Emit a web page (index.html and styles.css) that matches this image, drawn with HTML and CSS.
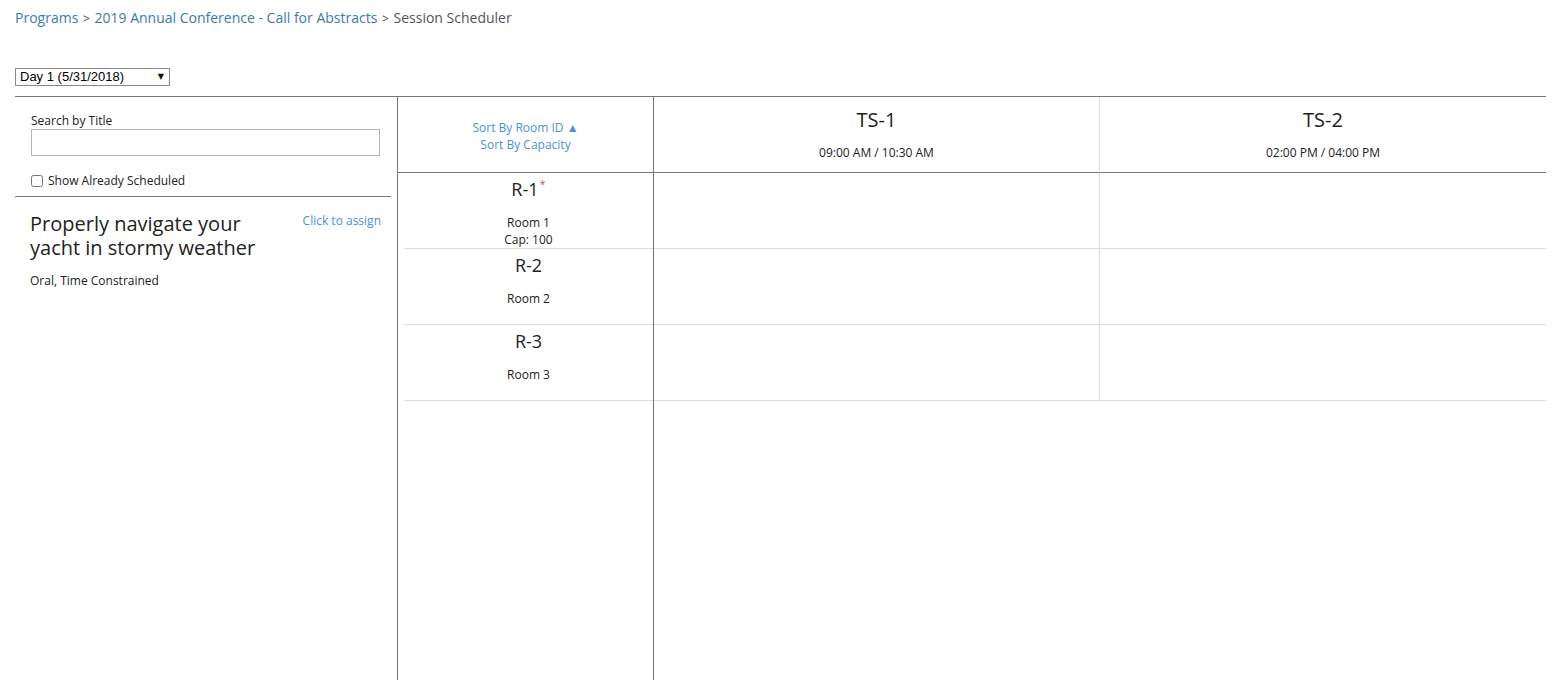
FILE: index.html
```html
<!DOCTYPE html>
<html lang="en">
<head>
    <meta charset="UTF-8">
    <meta name="viewport" content="width=device-width, initial-scale=1.0">
    <title>Session Scheduler</title>
    <link rel="stylesheet" href="styles.css">
</head>
<body>
    <div class="breadcrumb">
        <a href="#">Programs</a>
        <span class="sep">&gt;</span>
        <a href="#">2019 Annual Conference - Call for Abstracts</a>
        <span class="sep">&gt;</span>
        <span class="current">Session Scheduler</span>
    </div>

    <div class="day-picker">
        <select>
            <option>Day 1 (5/31/2018)</option>
            <option>Day 2 (6/1/2018)</option>
        </select>
    </div>

    <div class="scheduler">
        <div class="sidebar">
            <div class="search">
                <label class="search-label" for="searchTitle">Search by Title</label>
                <input type="text" id="searchTitle">
                <label class="show-scheduled">
                    <input type="checkbox">
                    <span>Show Already Scheduled</span>
                </label>
            </div>
            <div class="abstract">
                <div class="abstract-head">
                    <div class="abstract-title">Properly navigate your yacht in stormy weather</div>
                    <a href="#" class="assign">Click to assign</a>
                </div>
                <div class="abstract-type">Oral, Time Constrained</div>
            </div>
        </div>

        <div class="grid">
            <div class="rooms">
                <div class="head-cell sort">
                    <a href="#">Sort By Room ID &#9650;</a>
                    <a href="#">Sort By Capacity</a>
                </div>
                <div class="room-cell">
                    <div class="room-id">R-1<sup class="flag">*</sup></div>
                    <div class="room-name">Room 1</div>
                    <div class="room-cap">Cap: 100</div>
                </div>
                <div class="room-cell">
                    <div class="room-id">R-2</div>
                    <div class="room-name">Room 2</div>
                </div>
                <div class="room-cell">
                    <div class="room-id">R-3</div>
                    <div class="room-name">Room 3</div>
                </div>
            </div>

            <div class="slot">
                <div class="head-cell">
                    <div class="slot-name">TS-1</div>
                    <div class="slot-time">09:00 AM / 10:30 AM</div>
                </div>
                <div class="slot-cell"></div>
                <div class="slot-cell"></div>
                <div class="slot-cell"></div>
            </div>

            <div class="slot last">
                <div class="head-cell">
                    <div class="slot-name">TS-2</div>
                    <div class="slot-time">02:00 PM / 04:00 PM</div>
                </div>
                <div class="slot-cell"></div>
                <div class="slot-cell"></div>
                <div class="slot-cell"></div>
            </div>
        </div>
    </div>
</body>
</html>
```

FILE: styles.css
```css
html, body {
    height: 100%;
}

body {
    font-family: 'Open Sans', 'Liberation Sans', sans-serif;
    color: #222;
    background-color: #fff;
    margin: 0;
    padding: 0 17px 0 15px;
    display: flex;
    flex-direction: column;
    overflow: hidden;
}

a {
    text-decoration: none;
}

.breadcrumb {
    padding-top: 8px;
    height: 20px;
    font-size: 14px;
    line-height: 20px;
    color: #555;
    white-space: nowrap;
}

.breadcrumb a {
    color: #3a7ab3;
}

.breadcrumb .sep {
    color: #444;
    font-size: 12px;
    margin: 0 1px;
}

.day-picker {
    margin-top: 40px;
    margin-bottom: 10px;
    position: relative;
    width: 155px;
    height: 18px;
}

.day-picker select {
    display: block;
    -webkit-appearance: none;
    appearance: none;
    width: 155px;
    height: 18px;
    margin: 0;
    padding: 0 0 0 4px;
    border: 1px solid #8a8a8a;
    border-radius: 0;
    background-color: #fff;
    font-family: 'Liberation Sans', Arial, sans-serif;
    font-size: 13px;
    line-height: 16px;
    color: #000;
}

.day-picker::after {
    content: '\25BC';
    position: absolute;
    right: 6px;
    top: 1px;
    font-family: 'DejaVu Sans', sans-serif;
    font-size: 8px;
    line-height: 16px;
    color: #111;
    pointer-events: none;
}

.scheduler {
    flex-grow: 1;
    display: flex;
    border-top: 1px solid #777;
}

/* left column */
.sidebar {
    width: 376px;
    margin-right: 6px;
    flex-shrink: 0;
}

.search {
    padding: 15px 11px 6px 16px;
    border-bottom: 1px solid #777;
}

.search-label {
    display: block;
    font-size: 12px;
    line-height: 17px;
}

.search input[type="text"] {
    display: block;
    box-sizing: border-box;
    width: 349px;
    height: 27px;
    margin: 0;
    border: 1px solid #b5b5b5;
}

.show-scheduled {
    display: flex;
    align-items: center;
    margin-top: 16px;
    font-size: 12px;
    line-height: 18px;
}

.show-scheduled input {
    width: 12px;
    height: 12px;
    margin: 0 5px 0 0;
}

.abstract {
    padding: 15px 10px 0 15px;
}

.abstract-head {
    display: flex;
    justify-content: space-between;
    align-items: flex-start;
}

.abstract-title {
    width: 250px;
    font-size: 20px;
    line-height: 24px;
}

.assign {
    font-size: 12px;
    line-height: 17px;
    color: #4a8fe4;
}

.abstract-type {
    margin-top: 12px;
    font-size: 12px;
    line-height: 17px;
}

/* schedule grid */
.grid {
    flex-grow: 1;
    display: flex;
    border-left: 1px solid #777;
}

.rooms {
    width: 255px;
    flex-shrink: 0;
    border-right: 1px solid #777;
    text-align: center;
}

.slot {
    flex: 1;
    text-align: center;
}

.head-cell {
    box-sizing: border-box;
    height: 76px;
    border-bottom: 1px solid #777;
}

.sort {
    padding-top: 22px;
    font-size: 12px;
    line-height: 17px;
}

.sort a {
    display: block;
    color: #4a8fe4;
}

.room-cell {
    box-sizing: border-box;
    height: 76px;
    margin-left: 6px;
    padding-top: 4px;
    border-bottom: 1px solid #ddd;
}

.room-id {
    font-size: 18px;
    line-height: 24px;
    margin-bottom: 13px;
}

.flag {
    color: #d9534f;
    font-size: 11px;
    line-height: 0;
    vertical-align: 8px;
    margin-left: 1px;
}

.room-name,
.room-cap {
    font-size: 12px;
    line-height: 17px;
}

.slot .head-cell {
    padding-top: 10px;
}

.slot-name {
    font-size: 20px;
    line-height: 26px;
}

.slot-time {
    margin-top: 11px;
    font-size: 12px;
    line-height: 17px;
}

.slot-cell {
    box-sizing: border-box;
    height: 76px;
    border-bottom: 1px solid #ddd;
}

.slot .head-cell,
.slot .slot-cell {
    border-right: 1px solid #ddd;
}

.slot.last .head-cell,
.slot.last .slot-cell {
    border-right: none;
}

.slot .head-cell {
    border-bottom-color: #777;
}
```
